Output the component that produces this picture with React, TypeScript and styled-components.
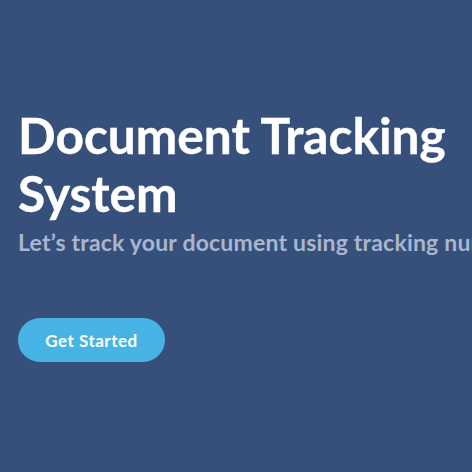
import React from "react";
import styled, { createGlobalStyle } from "styled-components";

const Global = createGlobalStyle`
  html, body { margin: 0; padding: 0; background: #36507b; }
  body { font-family: "Lato", "Open Sans", sans-serif; overflow: hidden; }
`;

const Hero = styled.section`
  width: 472px;
  height: 472px;
  box-sizing: border-box;
  background: #36507b;
  padding: 106px 0 0 18px;
  display: flex;
  flex-direction: column;
  overflow: hidden;
`;

const Title = styled.h1`
  margin: 0;
  font-family: "Lato", sans-serif;
  font-weight: 700;
  font-size: 49.6px;
  line-height: 58px;
  color: #ffffff;
  white-space: nowrap;
  -webkit-text-stroke: 0.4px #ffffff;
`;

const Subtitle = styled.p`
  margin: 5px 0 0;
  font-family: "Lato", sans-serif;
  font-weight: 700;
  font-size: 23px;
  line-height: 30px;
  letter-spacing: 0.2px;
  color: #a9b6cd;
  white-space: nowrap;
`;

const Button = styled.button`
  margin-top: 61px;
  align-self: flex-start;
  width: 147px;
  height: 44px;
  border: none;
  border-radius: 22px;
  background: #47b3e5;
  color: #ffffff;
  font-family: "Lato", sans-serif;
  font-weight: 700;
  font-size: 17px;
  letter-spacing: 0.5px;
  cursor: pointer;
`;

export default function App() {
  return (
    <>
      <Global />
      <Hero>
        <Title>
          Document Tracking
          <br />
          System
        </Title>
        <Subtitle>Let’s track your document using tracking number</Subtitle>
        <Button>Get Started</Button>
      </Hero>
    </>
  );
}
